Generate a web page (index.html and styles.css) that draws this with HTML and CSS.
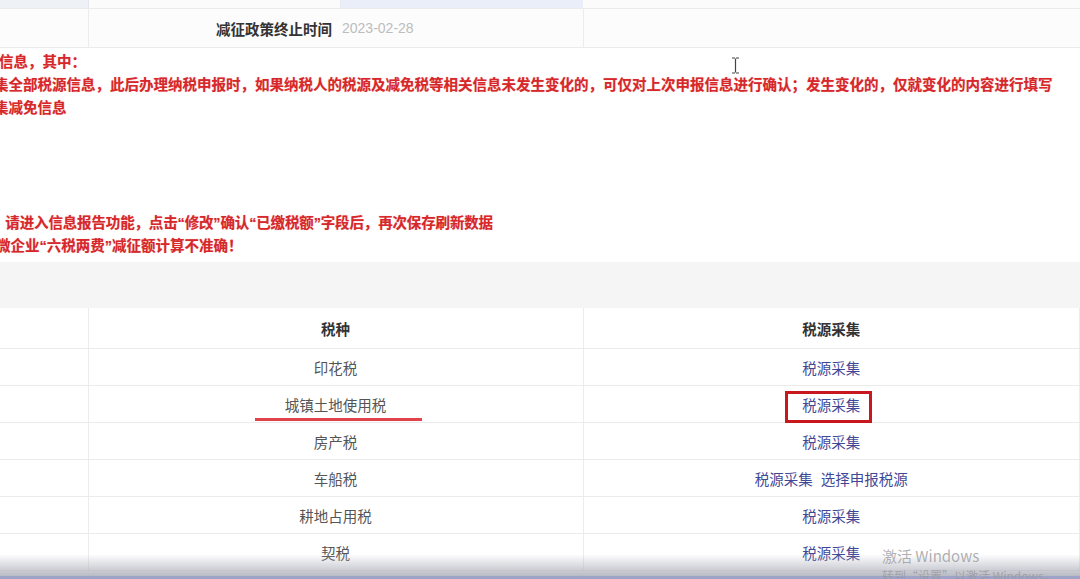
FILE: index.html
```html
<!DOCTYPE html>
<html lang="zh-CN">
<head>
  <meta charset="UTF-8">
  <meta name="viewport" content="width=device-width, initial-scale=1.0"/>
  <title>税源采集</title>
  <link rel="stylesheet" href="styles.css">
</head>
<body>
<div class="page">

  <table class="info">
    <colgroup><col class="c-side"><col class="c-label"><col class="c-value"><col></colgroup>
    <tr class="info-prev">
      <td class="tint"></td><td class="plain"></td><td class="blue"></td><td></td>
    </tr>
    <tr class="info-row">
      <td class="edge"></td><td class="label">减征政策终止时间</td><td class="value">2023-02-28</td><td></td>
    </tr>
  </table>

  <div class="notes">
    <p class="note shift-1">信息，其中：</p>
    <p class="note shift-6">集全部税源信息，此后办理纳税申报时，如果纳税人的税源及减免税等相关信息未发生变化的，可仅对上次申报信息进行确认；发生变化的，仅就变化的内容进行填写</p>
    <p class="note shift-6">集减免信息</p>
    <p class="note"></p>
    <p class="note"></p>
    <p class="note"></p>
    <p class="note"></p>
    <p class="note shift-9 tight">，请进入信息报告功能，点击“修改”确认“已缴税额”字段后，再次保存刷新数据</p>
    <p class="note shift-4">微企业“六税两费”减征额计算不准确！</p>
  </div>

  <div class="band"></div>

  <table class="sources">
    <colgroup><col class="c-side"><col class="c-kind"><col></colgroup>
    <tr>
      <th class="edge"></th><th>税种</th><th>税源采集</th>
    </tr>
    <tr>
      <td class="edge"></td><td>印花税</td><td><a href="#">税源采集</a></td>
    </tr>
    <tr>
      <td class="edge"></td><td><span class="underlined">城镇土地使用税</span></td><td><a href="#" class="marked">税源采集</a></td>
    </tr>
    <tr>
      <td class="edge"></td><td>房产税</td><td><a href="#">税源采集</a></td>
    </tr>
    <tr>
      <td class="edge"></td><td>车船税</td><td><a href="#">税源采集</a>&nbsp;&nbsp;<a href="#">选择申报税源</a></td>
    </tr>
    <tr>
      <td class="edge"></td><td>耕地占用税</td><td><a href="#">税源采集</a></td>
    </tr>
    <tr>
      <td class="edge"></td><td>契税</td><td><a href="#">税源采集</a></td>
    </tr>
  </table>

  <!-- text cursor left in the capture -->
  <svg class="cursor" width="9" height="17" viewBox="0 0 9 17">
    <path d="M1 1h3M5 1h3M4.5 1.5v14M1 16h3M5 16h3" stroke="#444" stroke-width="1.2" fill="none"/>
  </svg>

  <div class="shade"></div>

  <div class="activate">
    <div class="activate-title">激活 Windows</div>
    <div class="activate-sub">转到“设置”以激活 Windows。</div>
  </div>

</div>
</body>
</html>
```

FILE: styles.css
```css
html, body {
    margin: 0;
    height: 100%;
    overflow: hidden;
    background: #ffffff;
}

body {
    font-family: "Liberation Sans", "Noto Sans CJK SC", sans-serif;
    font-size: 14.5px;
    color: #555555;
}

.page {
    position: relative;
    height: 579px;
    overflow: hidden;
}

table {
    width: 100%;
    border-collapse: collapse;
    table-layout: fixed;
}

td, th {
    padding: 0;
    border-bottom: 1px solid #ebebeb;
}

.c-side { width: 88px; }
.c-label { width: 252px; }
.c-value { width: 243px; }
.c-kind { width: 495px; }

/* top info table, scrolled mostly out of view */
.info-prev td {
    height: 8px;
    background: #fbfbfc;
}
.info-prev .tint { background: #eef1f6; border-right: 1px solid #e4e7ec; }
.info-prev .blue { background: #e9eef8; }
.info-prev .plain { border-right: 1px solid #e6e9ee; }

.info-row td {
    height: 38px;
    background: #fcfcfc;
}
.info-row .edge { border-right: 1px solid #ededed; }
.info .label {
    text-align: right;
    padding-right: 8px;
    font-weight: bold;
    color: #333333;
}
.info .value {
    padding-left: 2px;
    font-size: 14px;
    color: #bdbdbd;
    border-right: 1px solid #ededed;
}

/* red notes */
.notes {
    padding: 2.5px 0 4.5px;
    color: #d6282b;
    font-weight: bold;
    line-height: 23px;
    white-space: nowrap;
    text-shadow: 0 0 1px rgba(230, 70, 70, 0.5);
}
.note {
    margin: 0;
    height: 23px;
}
.shift-1 { margin-left: -1px; }
.shift-4 { margin-left: -4px; }
.shift-6 { margin-left: -6px; }
.shift-9 { margin-left: -9px; }
.tight { letter-spacing: -0.15px; }

.band {
    height: 46px;
    background: #f5f5f5;
}

/* tax source table */
.sources th,
.sources td {
    text-align: center;
    border-right: 1px solid #ececec;
}
.sources th {
    height: 40px;
    font-weight: bold;
    color: #333333;
}
.sources td {
    height: 36px;
}
.sources a {
    color: #3f4896;
    text-decoration: none;
}

.underlined,
.marked {
    position: relative;
}
.underlined::after {
    content: "";
    position: absolute;
    left: -30px;
    right: -36px;
    bottom: -7px;
    height: 3px;
    background: #e2434a;
}
.marked::after {
    content: "";
    position: absolute;
    left: -17px;
    right: -12px;
    top: -7px;
    bottom: -9px;
    border: 3px solid #c9171e;
}

.cursor {
    position: absolute;
    left: 731px;
    top: 57px;
}

.shade {
    position: absolute;
    left: 0;
    right: 0;
    bottom: 0;
    height: 22px;
    background: linear-gradient(rgba(205, 205, 210, 0), rgba(178, 180, 190, 0.9));
    border-bottom: 3px solid #9da4c8;
}

.activate {
    position: absolute;
    left: 882px;
    top: 547px;
    color: rgba(150, 150, 155, 0.75);
    font-family: "Noto Sans CJK SC", sans-serif;
    line-height: 1.2;
}
.activate-title {
    font-size: 15px;
}
.activate-sub {
    font-size: 12px;
    margin-top: 4px;
}
```
